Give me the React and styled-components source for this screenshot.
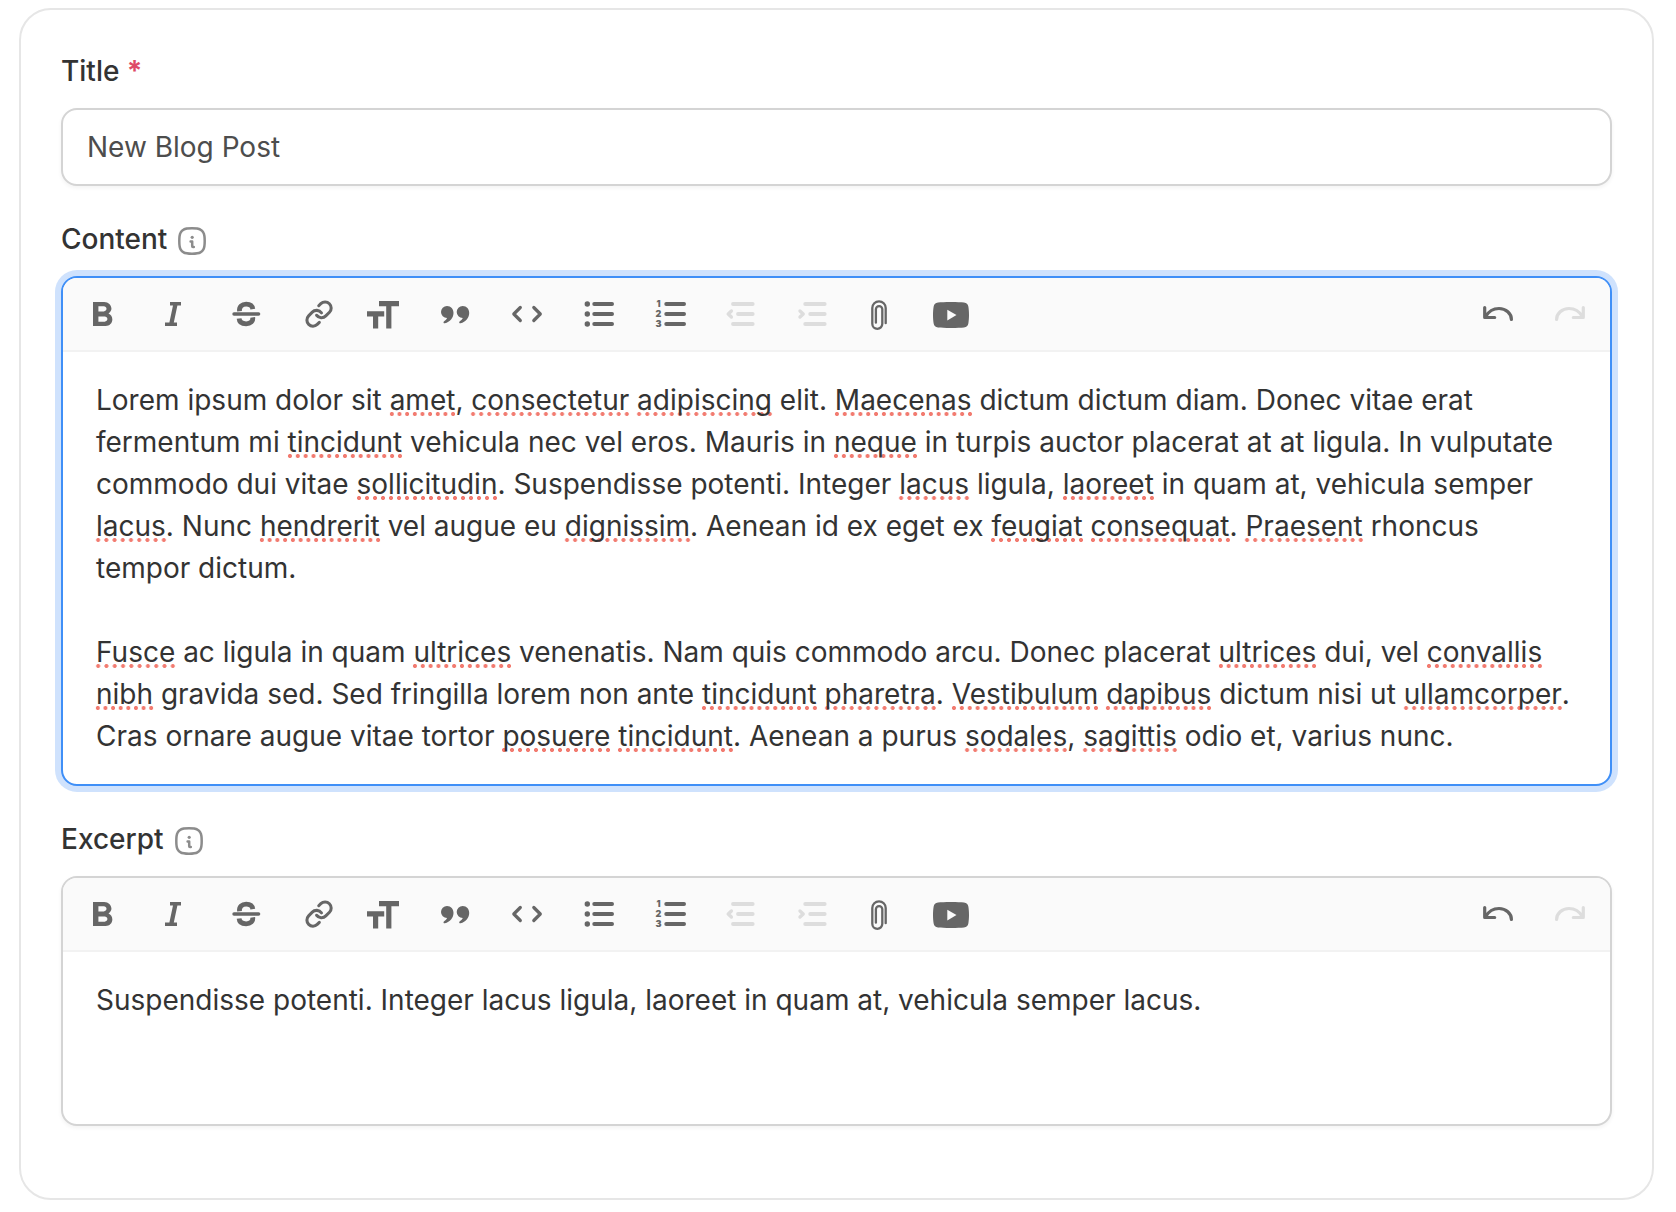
import React, { useId, useState } from "react";
import styled, { createGlobalStyle, css } from "styled-components";

const GlobalStyle = createGlobalStyle`
  * {
    box-sizing: border-box;
  }
  body {
    margin: 0;
    background: #ffffff;
    color: #333333;
    font-family: Inter, "Liberation Sans", sans-serif;
    font-size: 28px;
    line-height: 42px;
    -webkit-font-smoothing: antialiased;
  }
`;

const Page = styled.main`
  padding: 8px 22px 12px 19px;
`;

const Card = styled.form`
  display: flex;
  flex-direction: column;
  gap: 32px;
  padding: 40px 40px 72px;
  border: 2px solid #e6e6e6;
  border-radius: 32px;
  background: #ffffff;
`;

const Field = styled.div`
  display: flex;
  flex-direction: column;
  gap: 16px;
`;

const LabelRow = styled.div`
  display: flex;
  align-items: flex-end;
  gap: 11px;
`;

const Label = styled.label`
  font-weight: 500;
  color: #333333;
`;

const Required = styled.span`
  color: #de4a68;
  font-weight: 700;
`;

const InfoButton = styled.button`
  display: flex;
  margin: 0 0 5px;
  padding: 0;
  border: 0;
  background: none;
  color: #8c8c8c;
  cursor: pointer;
`;

const box = css`
  border: 2px solid #d4d4d4;
  border-radius: 16px;
  background: #ffffff;
  box-shadow: 0 2px 4px rgba(0, 0, 0, 0.05);
`;

const TextInput = styled.input`
  ${box}
  width: 100%;
  height: 78px;
  padding: 0 24px;
  color: #4d4d4d;
  font: inherit;
  outline: none;
`;

const EditorBox = styled.div`
  ${box}
  ${(props) =>
    props.$focused &&
    css`
      border-color: #3f8ff7;
      box-shadow: 0 0 0 6px #cfe2fd;
    `}
`;

const Toolbar = styled.div`
  display: flex;
  justify-content: space-between;
  border-bottom: 2px solid #f2f2f2;
  border-radius: 14px 14px 0 0;
  background: #fafafa;
`;

const ToolGroup = styled.div`
  display: flex;
`;

const ToolButton = styled.button`
  display: block;
  width: 72px;
  height: 72px;
  padding: 0;
  border: 0;
  background: none;
  color: #666666;
  cursor: pointer;

  &:disabled {
    color: #dddddd;
    cursor: default;
  }

  svg {
    display: block;
  }
`;

const EditorBody = styled.div`
  min-height: 172px;
  padding: 27px 33px;
  outline: none;
`;

const Paragraph = styled.p`
  margin: 0;

  & + & {
    margin-top: 42px;
  }
`;

const Misspelled = styled.span`
  margin: 0 -2px;
  padding: 0 2px;
  background-image: radial-gradient(circle at center, #f27b70 1.6px, transparent 2.4px);
  background-position: left calc(100% - 1px);
  background-repeat: round no-repeat;
  background-size: 8px 4px;
`;

const line = {
  fill: "none",
  stroke: "currentColor",
  strokeLinecap: "round",
  strokeLinejoin: "round",
};

const QUOTE_MARK =
  "M18 34a6 6 0 0 1 6-6c4 0 6.500 3 6.500 7 0 5-3.600 9-8.600 10.300-1.200.2-1.900-1-1-1.800 1.700-1.200 2.800-2.400 3.200-3.500H24a6 6 0 0 1-6-6z";

const ICONS = {
  bold: (
    <path
      transform="translate(17.4 17.1) scale(1.8 1.714)"
      fill="currentColor"
      d="M15.6 10.79c.97-.67 1.65-1.77 1.65-2.79 0-2.26-1.75-4-4-4H7v14h7.04c2.09 0 3.71-1.7 3.71-3.79 0-1.52-.86-2.82-2.15-3.42zM10 6.5h3c.83 0 1.5.67 1.5 1.5s-.67 1.5-1.5 1.5h-3v-3zm3.5 9H10v-3h3.5c.83 0 1.5.67 1.5 1.5s-.67 1.5-1.5 1.5z"
    />
  ),
  italic: (
    <path fill="currentColor" d="M35 24h11v3.4h-3.6l-3.6 17.200h3.200V48H30v-3.4h4.400L38 27.400h-3z" />
  ),
  strike: (
    <g {...line} strokeLinecap="butt">
      <path strokeWidth="3.4" strokeLinecap="round" d="M27 36h24.600" />
      <path
        strokeWidth="4.8"
        d="M32.500 33.300c-.6-4.700 2.500-7.200 6.700-7.200 3.600 0 6.200 1.700 6.600 5M32.100 40.500c.2 3.600 3 5.300 7 5.300 4.500 0 7.200-2.600 6.600-6.500"
      />
    </g>
  ),
  link: (
    <g {...line} strokeWidth="2.500" transform="translate(25.400 21.400) scale(1.220)">
      <path d="M10 13a5 5 0 0 0 7.54.54l3-3a5 5 0 0 0-7.07-7.07l-1.72 1.71" />
      <path d="M14 11a5 5 0 0 0-7.54-.54l-3 3a5 5 0 0 0 7.07 7.07l1.71-1.71" />
    </g>
  ),
  heading: (
    <path
      fill="currentColor"
      d="M28 23h20v5.200h-7.600v22.200h-5.200V28.200H28zM16 33.200h17.200v5.200H27.200v12H22v-12h-6z"
    />
  ),
  quote: (
    <g fill="currentColor">
      <path d={QUOTE_MARK} />
      <path d={QUOTE_MARK} transform="translate(15.700)" />
    </g>
  ),
  code: (
    <path {...line} strokeWidth="3.2" d="M25.300 29.500 18.800 36l6.500 6.500M38.800 29.500l6.500 6.500-6.500 6.500" />
  ),
  bullets: (
    <g>
      <g fill="currentColor">
        <circle cx="20.3" cy="26" r="2.7" />
        <circle cx="20.3" cy="36" r="2.7" />
        <circle cx="20.3" cy="46" r="2.7" />
      </g>
      <path {...line} strokeWidth="3.8" d="M27.200 26h17.900M27.200 36h17.900M27.200 46h17.900" />
    </g>
  ),
  numbers: (
    <g>
      <g fill="currentColor" fontFamily="Inter, sans-serif" fontSize="9" fontWeight="900" textAnchor="middle">
        <text x="19.5" y="29.3">1</text>
        <text x="19.5" y="39.3">2</text>
        <text x="19.5" y="49.3">3</text>
      </g>
      <path {...line} strokeWidth="3.8" d="M27.200 26h17.900M27.200 36h17.900M27.200 46h17.900" />
    </g>
  ),
  outdent: (
    <g {...line}>
      <path strokeWidth="3.8" d="M22 26h19.700M27 36h14.700M22 46h19.700" />
      <path strokeWidth="3.4" d="M20.400 33 17.200 36l3.200 3" />
    </g>
  ),
  indent: (
    <g {...line}>
      <path strokeWidth="3.8" d="M22.200 26h19.500M27.200 36h14.500M22.200 46h19.500" />
      <path strokeWidth="3.4" d="m17 33 3.200 3-3.200 3" />
    </g>
  ),
  attach: (
    <path
      {...line}
      strokeWidth="2.3"
      d="M30.700 45.200V30a6.700 6.700 0 0 0-13.400 0v15.800a5 5 0 0 0 10 0V31.300a3.200 3.200 0 0 0-6.400 0v13.400"
    />
  ),
  video: (
    <path
      fill="currentColor"
      fillRule="evenodd"
      d="M24 24c6 0 10 .2 13 .5 2.500.3 4 1.800 4.400 4.300.4 2.600.6 5 .6 8.200s-.2 5.600-.6 8.200c-.4 2.500-1.900 4-4.400 4.300-3 .3-7 .5-13 .5s-10-.2-13-.5c-2.500-.3-4-1.800-4.400-4.300C6.200 42.600 6 40.200 6 37s.2-5.600.6-8.200c.4-2.500 1.900-4 4.400-4.300 3-.3 7-.5 13-.5zM20.300 31.800v10.600l9.200-5.300z"
    />
  ),
  undo: (
    <path
      {...line}
      strokeWidth="3.2"
      d="M18.700 29.500v10h10M19.500 38.700c3-5.200 8-8.200 13.500-8.200 7 0 12.400 5 12.400 10.900"
    />
  ),
  redo: (
    <path
      {...line}
      strokeWidth="3.2"
      d="M45.300 29.500v10h-10M44.500 38.700c-3-5.200-8-8.200-13.500-8.200-7 0-12.400 5-12.400 10.900"
    />
  ),
};

const TOOLS = [
  { icon: "bold", label: "Bold" },
  { icon: "italic", label: "Italic" },
  { icon: "strike", label: "Strikethrough" },
  { icon: "link", label: "Link" },
  { icon: "heading", label: "Heading" },
  { icon: "quote", label: "Quote" },
  { icon: "code", label: "Code" },
  { icon: "bullets", label: "Bullets" },
  { icon: "numbers", label: "Numbers" },
  { icon: "outdent", label: "Decrease level", disabled: true },
  { icon: "indent", label: "Increase level", disabled: true },
  { icon: "attach", label: "Attach files" },
  { icon: "video", label: "Embed video" },
];

const HISTORY = [
  { icon: "undo", label: "Undo" },
  { icon: "redo", label: "Redo", disabled: true },
];

const CONTENT = [
  "Lorem ipsum dolor sit amet, consectetur adipiscing elit. Maecenas dictum dictum diam. Donec vitae erat fermentum mi tincidunt vehicula nec vel eros. Mauris in neque in turpis auctor placerat at at ligula. In vulputate commodo dui vitae sollicitudin. Suspendisse potenti. Integer lacus ligula, laoreet in quam at, vehicula semper lacus. Nunc hendrerit vel augue eu dignissim. Aenean id ex eget ex feugiat consequat. Praesent rhoncus tempor dictum.",
  "Fusce ac ligula in quam ultrices venenatis. Nam quis commodo arcu. Donec placerat ultrices dui, vel convallis nibh gravida sed. Sed fringilla lorem non ante tincidunt pharetra. Vestibulum dapibus dictum nisi ut ullamcorper. Cras ornare augue vitae tortor posuere tincidunt. Aenean a purus sodales, sagittis odio et, varius nunc.",
];

const EXCERPT = [
  "Suspendisse potenti. Integer lacus ligula, laoreet in quam at, vehicula semper lacus.",
];

const UNKNOWN_WORDS = new Set(
  (
    "amet consectetur adipiscing Maecenas tincidunt neque sollicitudin lacus laoreet hendrerit " +
    "dignissim feugiat consequat Praesent Fusce ultrices convallis nibh pharetra Vestibulum " +
    "dapibus ullamcorper posuere sodales sagittis"
  ).split(" ")
);

function markSpelling(text) {
  return text
    .split(/(\w+)/)
    .map((part, i) => (UNKNOWN_WORDS.has(part) ? <Misspelled key={i}>{part}</Misspelled> : part));
}

function Tools({ items }) {
  return (
    <ToolGroup>
      {items.map(({ icon, label, disabled }) => (
        <ToolButton key={icon} type="button" aria-label={label} disabled={disabled}>
          <svg width="72" height="72" viewBox="0 0 72 72" aria-hidden="true">
            {ICONS[icon]}
          </svg>
        </ToolButton>
      ))}
    </ToolGroup>
  );
}

function Info({ label }) {
  return (
    <InfoButton type="button" aria-label={label}>
      <svg width="28" height="28" viewBox="0 0 28 28" {...line} aria-hidden="true">
        <path
          strokeWidth="2.5"
          d="M14 1.300c4 0 6.700.3 8.400 1.300 1.300.7 2.300 1.700 3 3 1 1.700 1.300 4.400 1.300 8.400s-.3 6.700-1.300 8.400c-.7 1.300-1.700 2.300-3 3-1.700 1-4.400 1.300-8.400 1.300s-6.700-.3-8.400-1.300c-1.300-.7-2.300-1.700-3-3-1-1.700-1.300-4.400-1.300-8.400s.3-6.700 1.300-8.400c.7-1.300 1.700-2.300 3-3C7.300 1.600 10 1.300 14 1.300z"
        />
        <path strokeWidth="2.5" d="M12.600 14.600h1.600v4.600c0 .5.300.8.800.8h.8" />
        <circle cx="14.2" cy="10.3" r="1.6" fill="currentColor" stroke="none" />
      </svg>
    </InfoButton>
  );
}

function RichTextField({ label, paragraphs, focused }) {
  const id = useId();
  return (
    <Field>
      <LabelRow>
        <Label as="span" id={id}>
          {label}
        </Label>
        <Info label={`About ${label}`} />
      </LabelRow>
      <EditorBox $focused={focused}>
        <Toolbar role="toolbar" aria-label={`${label} formatting`}>
          <Tools items={TOOLS} />
          <Tools items={HISTORY} />
        </Toolbar>
        <EditorBody
          role="textbox"
          aria-multiline="true"
          aria-labelledby={id}
          contentEditable
          suppressContentEditableWarning
          spellCheck={false}
        >
          {paragraphs.map((text, i) => (
            <Paragraph key={i}>{focused ? markSpelling(text) : text}</Paragraph>
          ))}
        </EditorBody>
      </EditorBox>
    </Field>
  );
}

export default function App() {
  const [title, setTitle] = useState("New Blog Post");
  return (
    <>
      <GlobalStyle />
      <Page>
        <Card onSubmit={(e) => e.preventDefault()}>
          <Field>
            <LabelRow>
              <Label htmlFor="post-title">
                Title <Required>*</Required>
              </Label>
            </LabelRow>
            <TextInput
              id="post-title"
              type="text"
              required
              value={title}
              onChange={(e) => setTitle(e.target.value)}
            />
          </Field>
          <RichTextField label="Content" paragraphs={CONTENT} focused />
          <RichTextField label="Excerpt" paragraphs={EXCERPT} />
        </Card>
      </Page>
    </>
  );
}
